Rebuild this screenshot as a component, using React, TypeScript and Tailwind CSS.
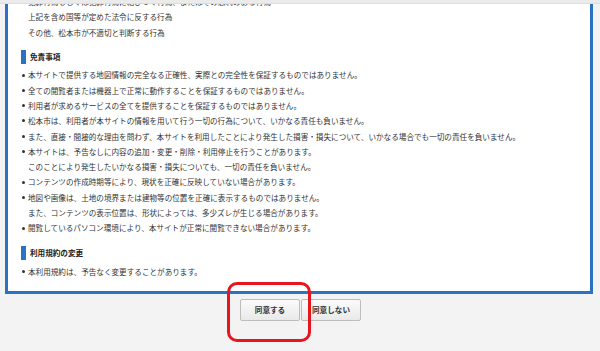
import React from "react";

const font = { fontFamily: '"Noto Sans CJK JP", "Noto Sans", sans-serif' };

function Line({ bullet, children }: { bullet?: boolean; children: React.ReactNode }) {
  return (
    <div className="flex items-center h-[15.3px] leading-[15.3px] whitespace-nowrap">
      <span className="w-[6px] flex items-center">
        {bullet ? <span className="block w-[3px] h-[3px] rounded-full bg-[#333]" /> : null}
      </span>
      <span>{children}</span>
    </div>
  );
}

function Heading({ children }: { children: React.ReactNode }) {
  return (
    <div className="flex items-center h-[14px] -ml-[1px]">
      <span className="block w-[5px] h-[14px] bg-[#2b73c2]" />
      <span className="ml-[4px] font-bold text-[7.6px] text-[#222]">{children}</span>
    </div>
  );
}

export default function App() {
  return (
    <div
      className="relative w-[600px] h-[351px] overflow-hidden bg-[#f3f3f3] text-[#333]"
      style={font}
    >
      <div className="h-[4px] bg-[#ebebeb] border-b border-[#dedede]" />
      <div className="ml-[5px] w-[588px] h-[290px] bg-white border-x-[3px] border-b-[3px] border-[#2b73c2] overflow-hidden">
        <div className="-mt-[10px] pl-[14px] text-[7.6px]">
          <Line>犯罪行為もしくは犯罪行為に結びつく行為、またはその恐れのある行為</Line>
          <Line>上記を含め国等が定めた法令に反する行為</Line>
          <Line>その他、松本市が不適切と判断する行為</Line>

          <div className="mt-[10px]">
            <Heading>免責事項</Heading>
          </div>
          <div className="mt-[3.5px]">
            <Line bullet>本サイトで提供する地図情報の完全なる正確性、実際との完全性を保証するものではありません。</Line>
            <Line bullet>全ての閲覧者または機器上で正常に動作することを保証するものではありません。</Line>
            <Line bullet>利用者が求めるサービスの全てを提供することを保証するものではありません。</Line>
            <Line bullet>松本市は、利用者が本サイトの情報を用いて行う一切の行為について、いかなる責任も負いません。</Line>
            <Line bullet>また、直接・間接的な理由を問わず、本サイトを利用したことにより発生した損害・損失について、いかなる場合でも一切の責任を負いません。</Line>
            <Line bullet>本サイトは、予告なしに内容の追加・変更・削除・利用停止を行うことがあります。</Line>
            <Line>このことにより発生したいかなる損害・損失についても、一切の責任を負いません。</Line>
            <Line bullet>コンテンツの作成時期等により、現状を正確に反映していない場合があります。</Line>
            <Line bullet>地図や画像は、土地の境界または建物等の位置を正確に表示するものではありません。</Line>
            <Line>また、コンテンツの表示位置は、形状によっては、多少ズレが生じる場合があります。</Line>
            <Line bullet>閲覧しているパソコン環境により、本サイトが正常に閲覧できない場合があります。</Line>
          </div>

          <div className="mt-[10.5px]">
            <Heading>利用規約の変更</Heading>
          </div>
          <div className="mt-[4px]">
            <Line bullet>本利用規約は、予告なく変更することがあります。</Line>
          </div>
        </div>
      </div>

      <div className="mt-[5px] flex justify-center gap-[1px] pl-[1px]">
        <button className="w-[60px] h-[22px] border border-[#bdbdbd] rounded-[2px] bg-gradient-to-b from-[#fbfbfb] to-[#e9e9e9] text-[7.6px] font-bold text-[#333]">
          同意する
        </button>
        <button className="w-[60px] h-[22px] border border-[#bdbdbd] rounded-[2px] bg-gradient-to-b from-[#fbfbfb] to-[#e9e9e9] text-[7.6px] font-bold text-[#333]">
          同意しない
        </button>
      </div>

      <div className="absolute left-[227px] top-[282px] w-[84px] h-[60px] border-[3px] border-[#e8141e] rounded-[10px]" />
    </div>
  );
}
